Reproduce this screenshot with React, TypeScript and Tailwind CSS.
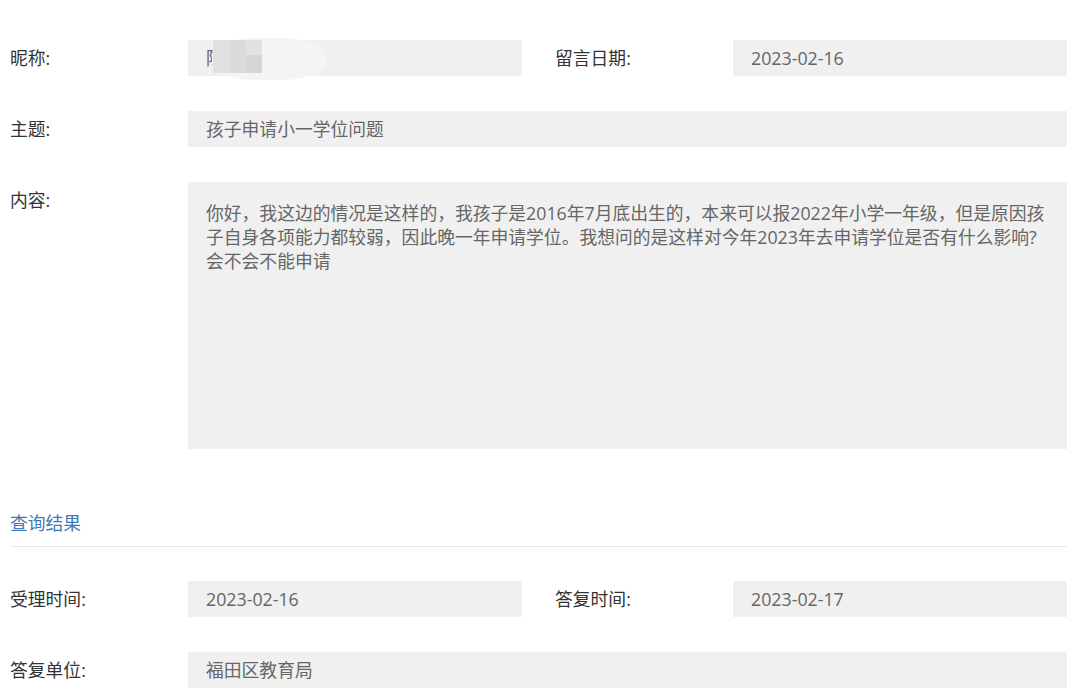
import React from 'react';

const font = { fontFamily: '"Open Sans", "Noto Sans CJK SC", sans-serif' };

function Field({ label, children, wide }: { label: string; children: React.ReactNode; wide?: boolean }) {
  return (
    <div className={wide ? 'col-span-3 flex' : 'flex'}>
      <div className="w-[178px] shrink-0 leading-[36px] text-[#333]">{label}</div>
      <div className="relative flex h-[36px] flex-1 items-center bg-[#f0f0f0] pl-[18px] text-[#666]">{children}</div>
    </div>
  );
}

function Row({ children }: { children: React.ReactNode }) {
  return <div className="grid grid-cols-[512px_512px] gap-x-[33px]">{children}</div>;
}

export default function App() {
  return (
    <div className="min-h-screen bg-white pl-[10px] pt-[40px] text-[17.8px]" style={font}>
      <div className="w-[1057px]">
        <Row>
          <Field label="昵称:">
            <span className="overflow-hidden">陈</span>
            {/* mosaic blur over the nickname */}
            <div className="absolute left-[24px] top-[-2px] h-[42px] w-[114px] rounded-[40%] bg-[#f4f4f4]">
              <div className="absolute left-[1px] top-[2px] flex h-[33px]">
                <div className="w-[18px] bg-[#e0e0e0]" />
                <div className="w-[15px] bg-[#dadada]" />
                <div className="flex w-[16px] flex-col">
                  <div className="h-[15px] bg-[#e2e2e2]" />
                  <div className="flex-1 bg-[#d6d6d6]" />
                </div>
              </div>
            </div>
          </Field>
          <Field label="留言日期:">2023-02-16</Field>
        </Row>

        <div className="mt-[35px] flex">
          <div className="w-[178px] shrink-0 leading-[36px] text-[#333]">主题:</div>
          <div className="flex h-[36px] flex-1 items-center bg-[#f0f0f0] pl-[18px] text-[#666]">孩子申请小一学位问题</div>
        </div>

        <div className="mt-[35px] flex">
          <div className="w-[178px] shrink-0 leading-[36px] text-[#333]">内容:</div>
          <div className="h-[267px] flex-1 bg-[#f0f0f0] pl-[18px] pr-[16px] pt-[19px] leading-[24px] text-[#666]">
            你好，我这边的情况是这样的，我孩子是2016年7月底出生的，本来可以报2022年小学一年级，但是原因孩子自身各项能力都较弱，因此晚一年申请学位。我想问的是这样对今年2023年去申请学位是否有什么影响?会不会不能申请
          </div>
        </div>

        <div className="mt-[62px] border-b border-[#e8e8e8] pb-[11px] leading-[24px] text-[#3f7bb6]">查询结果</div>

        <div className="mt-[34px]">
          <Row>
            <Field label="受理时间:">2023-02-16</Field>
            <Field label="答复时间:">2023-02-17</Field>
          </Row>
        </div>

        <div className="mt-[35px] flex">
          <div className="w-[178px] shrink-0 leading-[36px] text-[#333]">答复单位:</div>
          <div className="flex h-[36px] flex-1 items-center bg-[#f0f0f0] pl-[18px] text-[#666]">福田区教育局</div>
        </div>
      </div>
    </div>
  );
}
